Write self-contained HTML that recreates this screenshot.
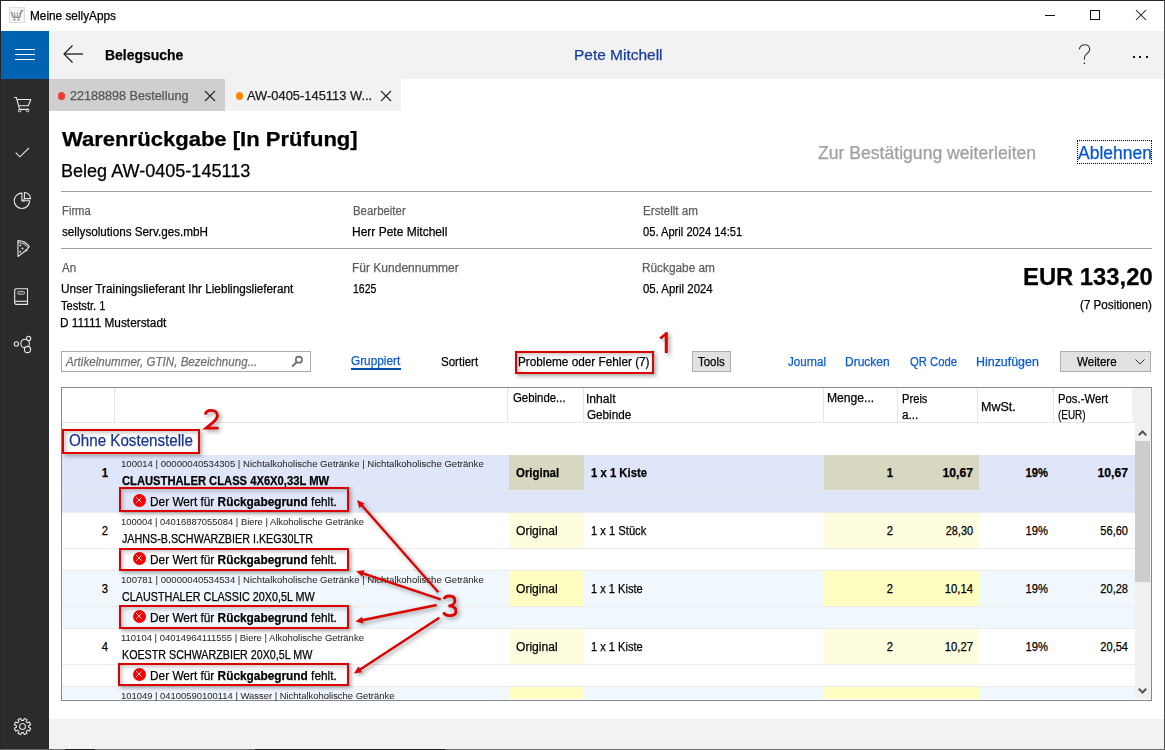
<!DOCTYPE html>
<html><head><meta charset="utf-8"><title>Meine sellyApps</title><style>
html,body{margin:0;padding:0;width:1165px;height:750px;overflow:hidden;background:#fff;font-family:"Liberation Sans",sans-serif;}
.a{position:absolute;}
.t{position:absolute;white-space:nowrap;line-height:1;-webkit-text-stroke:0.25px currentColor;}
svg{position:absolute;overflow:visible;}
</style></head><body>
<!-- window borders -->
<div class="a" style="left:0;top:0;width:1165px;height:1px;background:#262626"></div>
<div class="a" style="left:0;top:0;width:1px;height:750px;background:#262626"></div>
<div class="a" style="left:1164px;top:0;width:1px;height:750px;background:#4a4a4a"></div>
<div class="a" style="left:0;top:749px;width:1165px;height:1px;background:#6a6a6a"></div><div class="a" style="left:65px;top:749px;width:30px;height:1px;background:#222"></div><div class="a" style="left:255px;top:749px;width:190px;height:1px;background:#222"></div>
<!-- title bar icon -->
<div class="a" style="left:9px;top:7px;width:14px;height:14px;border:1px solid #dcdcdc;background:#f4f4f4"></div>
<svg style="left:9px;top:7px" width="16" height="16" viewBox="0 0 16 16"><path d="M2.3 5 L4.3 10.3 H10.6 L12.4 3.6 H14.4" fill="none" stroke="#8c8c8c" stroke-width="1.4"/><path d="M5.2 5.2 L6.2 9.3 M8.2 5.2 L8.5 9.3 M11.2 5.2 L10.6 8" stroke="#a0a0a0" stroke-width="1.1"/><circle cx="5.4" cy="12.6" r="1.1" fill="#8c8c8c"/><circle cx="9.6" cy="12.6" r="1.1" fill="#8c8c8c"/></svg>
<!-- window controls -->
<div class="a" style="left:1045px;top:15px;width:10px;height:1px;background:#111"></div>
<div class="a" style="left:1090px;top:10px;width:8px;height:8px;border:1px solid #111"></div>
<svg style="left:1136px;top:10px" width="10" height="10" viewBox="0 0 10 10"><path d="M0 0 L10 10 M10 0 L0 10" stroke="#111" stroke-width="1.05"/></svg>
<!-- header -->
<div class="a" style="left:49px;top:31px;width:1115px;height:48px;background:#f2f2f2"></div>
<div class="a" style="left:1px;top:31px;width:48px;height:48px;background:#0063b1"></div>
<div class="a" style="left:15px;top:49px;width:20px;height:1px;background:#fff"></div>
<div class="a" style="left:15px;top:54px;width:20px;height:1px;background:#fff"></div>
<div class="a" style="left:15px;top:59px;width:20px;height:1px;background:#fff"></div>
<svg style="left:63px;top:45px" width="20" height="18" viewBox="0 0 20 18"><path d="M9.5 0.5 L1 9 L9.5 17.5" fill="none" stroke="#111" stroke-width="1.1"/><path d="M1.5 9 H20" fill="none" stroke="#333" stroke-width="1.5"/></svg>
<svg style="left:1078px;top:44px" width="14" height="20" viewBox="0 0 14 20"><path d="M1.3 5.3 C1.9 2.3 4 0.7 6.8 0.7 C9.6 0.7 11.7 2.6 11.7 5.3 C11.7 8.2 9.2 9.2 7.6 11 C6.7 12 6.4 13.2 6.4 14.5 V15.8" fill="none" stroke="#333" stroke-width="1.1"/><circle cx="6.4" cy="19.3" r="0.85" fill="#333"/></svg>
<div class="a" style="left:1133px;top:56px;width:2px;height:2px;background:#111"></div>
<div class="a" style="left:1139px;top:56px;width:2px;height:2px;background:#111"></div>
<div class="a" style="left:1146px;top:56px;width:2px;height:2px;background:#111"></div>
<!-- sidebar -->
<div class="a" style="left:1px;top:79px;width:48px;height:670px;background:#2b2b2b"></div>
<!-- sidebar icons -->
<svg style="left:13px;top:96px" width="20" height="17" viewBox="0 0 20 17"><path d="M1.2 1.5 H3.4 L6.6 13.4 H15.9 M3.9 3.5 H17.8 L15.3 9.7 H5.7" fill="none" stroke="#e8e8e8" stroke-width="1.1" stroke-linejoin="round"/><circle cx="6.6" cy="14.6" r="1.3" fill="none" stroke="#e8e8e8" stroke-width="1"/><circle cx="14.5" cy="14.5" r="1.3" fill="none" stroke="#e8e8e8" stroke-width="1"/></svg>
<svg style="left:15px;top:147px" width="15" height="11" viewBox="0 0 15 11"><path d="M0.7 5.6 L4.9 9.8 L13.9 1" fill="none" stroke="#e8e8e8" stroke-width="1.1"/></svg>
<svg style="left:13px;top:191px" width="19" height="19" viewBox="0 0 19 19"><path d="M8.9 9.8 H10.6 V8" fill="none" stroke="#9a9a9a" stroke-width="2"/><path d="M8.9 2.1 A7.7 7.7 0 1 0 16.6 9.8 H8.9 Z" fill="none" stroke="#e8e8e8" stroke-width="1.1"/><path d="M11.4 1.5 A6.1 6.1 0 0 1 17.5 7.6 H11.4 Z" fill="none" stroke="#e8e8e8" stroke-width="1.1"/></svg>
<svg style="left:16px;top:239px" width="15" height="19" viewBox="0 0 15 19"><path d="M1.9 1.6 C6 1.6 10.5 3.8 13.2 7.6 L10.5 11 L2 17.5 Z" fill="none" stroke="#e8e8e8" stroke-width="1.1" stroke-linejoin="round"/><path d="M2.2 3.6 C6 3.8 9.8 5.6 11.8 8.5" fill="none" stroke="#e8e8e8" stroke-width="0.9"/><circle cx="10.2" cy="11.3" r="1.2" fill="#cfcfcf"/><circle cx="4.3" cy="6.4" r="0.9" fill="#e8e8e8"/><circle cx="6.5" cy="9.5" r="0.9" fill="#e8e8e8"/><circle cx="4.3" cy="12.7" r="0.9" fill="#e8e8e8"/></svg>
<svg style="left:14px;top:288px" width="15" height="18" viewBox="0 0 15 18"><path d="M1.8 0.7 H13.5 V16.4 H1.8 L0.7 15.3 V1.8 Z" fill="none" stroke="#e8e8e8" stroke-width="1.1"/><path d="M0.7 13.3 H13.5" stroke="#e8e8e8" stroke-width="1.1"/><rect x="3.7" y="3.7" width="6.7" height="2.4" rx="0.6" fill="none" stroke="#d0d0d0" stroke-width="1"/></svg>
<svg style="left:13px;top:336px" width="19" height="18" viewBox="0 0 19 18"><circle cx="3.4" cy="7.9" r="2.1" fill="none" stroke="#e8e8e8" stroke-width="1.1"/><circle cx="12.1" cy="7.5" r="4.3" fill="none" stroke="#e8e8e8" stroke-width="1.1"/><circle cx="15.6" cy="2.4" r="2.1" fill="#2b2b2b" stroke="#e8e8e8" stroke-width="1.1"/><circle cx="14.5" cy="13.5" r="3.1" fill="#2b2b2b" stroke="#e8e8e8" stroke-width="1.1"/></svg>
<svg style="left:13px;top:717px" width="19" height="19" viewBox="0 0 19 19"><path d="M15.60 9.50 L15.54 10.36 L17.60 11.31 L16.51 13.95 L14.38 13.16 L13.81 13.81 L13.16 14.38 L13.95 16.51 L11.31 17.60 L10.36 15.54 L9.50 15.60 L8.64 15.54 L7.69 17.60 L5.05 16.51 L5.84 14.38 L5.19 13.81 L4.62 13.16 L2.49 13.95 L1.40 11.31 L3.46 10.36 L3.40 9.50 L3.46 8.64 L1.40 7.69 L2.49 5.05 L4.62 5.84 L5.19 5.19 L5.84 4.62 L5.05 2.49 L7.69 1.40 L8.64 3.46 L9.50 3.40 L10.36 3.46 L11.31 1.40 L13.95 2.49 L13.16 4.62 L13.81 5.19 L14.38 5.84 L16.51 5.05 L17.60 7.69 L15.54 8.64 Z" fill="none" stroke="#e8e8e8" stroke-width="1.1" stroke-linejoin="round"/><circle cx="9.5" cy="9.5" r="3" fill="none" stroke="#d8d8d8" stroke-width="1.1"/></svg>
<!-- tabs -->
<div class="a" style="left:49px;top:79px;width:176px;height:32px;background:#cfcfcf"></div>
<div class="a" style="left:225px;top:79px;width:176px;height:32px;background:#f2f2f2"></div>
<div class="a" style="left:57.5px;top:92px;width:7.5px;height:7.5px;border-radius:50%;background:#f03a3a"></div>
<div class="a" style="left:235.5px;top:92px;width:7.5px;height:7.5px;border-radius:50%;background:#ff8c00"></div>
<svg style="left:205px;top:91px" width="10" height="10" viewBox="0 0 10 10"><path d="M0 0 L10 10 M10 0 L0 10" stroke="#222" stroke-width="1.1"/></svg>
<svg style="left:381px;top:91px" width="10" height="10" viewBox="0 0 10 10"><path d="M0 0 L10 10 M10 0 L0 10" stroke="#222" stroke-width="1.1"/></svg>
<!-- bottom strip -->
<div class="a" style="left:49px;top:719px;width:1115px;height:30px;background:#f2f2f2"></div>
<!-- focus rect Ablehnen -->
<div class="a" style="left:1077px;top:140px;width:73px;height:22px;border:1px dotted #000"></div>
<!-- hr lines -->
<div class="a" style="left:61px;top:191px;width:1091px;height:1px;background:#a0a0a0"></div>
<div class="a" style="left:61px;top:248px;width:1091px;height:1px;background:#a0a0a0"></div>
<!-- toolbar -->
<div class="a" style="left:61px;top:351px;width:248px;height:19px;border:1px solid #ababab;background:#fff"></div>
<svg style="left:291px;top:356px" width="12" height="11" viewBox="0 0 12 11"><circle cx="7.9" cy="3.7" r="3.1" fill="none" stroke="#6a6a6a" stroke-width="1.6"/><path d="M5.6 6.1 L1.2 10.5" stroke="#6a6a6a" stroke-width="1.8"/></svg>
<div class="a" style="left:351px;top:368px;width:50px;height:2px;background:#0050b0"></div>
<div class="a" style="left:692px;top:351px;width:37px;height:19px;border:1px solid #adadad;background:#e1e1e1"></div>
<div class="a" style="left:1060px;top:351px;width:89px;height:19px;border:1px solid #adadad;background:#e1e1e1"></div>
<svg style="left:1135px;top:359px" width="10" height="6" viewBox="0 0 10 6"><path d="M0.5 0.5 L5 5 L9.5 0.5" fill="none" stroke="#333" stroke-width="1"/></svg>
<!-- table -->
<div class="a" style="left:61px;top:387px;width:1089px;height:312px;border:1px solid #828790;background:#fff"></div>
<div class="a" style="left:1132px;top:388px;width:19px;height:35px;background:#f0f0f0"></div>
<div class="a" style="left:1135px;top:423px;width:16px;height:276px;background:#f0f0f0"></div>
<div class="a" style="left:62px;top:455px;width:1073px;height:58px;background:#e0e6fa"></div>
<div class="a" style="left:509px;top:455px;width:75px;height:35px;background:#d8d7bf"></div>
<div class="a" style="left:824px;top:455px;width:155px;height:35px;background:#d8d7bf"></div>
<div class="a" style="left:62px;top:490px;width:1073px;height:1px;background:#ebebeb"></div>
<div class="a" style="left:62px;top:512px;width:1073px;height:1px;background:#ebebeb"></div>
<div class="a" style="left:62px;top:513px;width:1073px;height:58px;background:#ffffff"></div>
<div class="a" style="left:509px;top:513px;width:75px;height:35px;background:#fffde0"></div>
<div class="a" style="left:824px;top:513px;width:155px;height:35px;background:#fffde0"></div>
<div class="a" style="left:62px;top:548px;width:1073px;height:1px;background:#ebebeb"></div>
<div class="a" style="left:62px;top:570px;width:1073px;height:1px;background:#ebebeb"></div>
<div class="a" style="left:62px;top:571px;width:1073px;height:58px;background:#f0f8fd"></div>
<div class="a" style="left:509px;top:571px;width:75px;height:35px;background:#ffffc2"></div>
<div class="a" style="left:824px;top:571px;width:155px;height:35px;background:#ffffc2"></div>
<div class="a" style="left:62px;top:606px;width:1073px;height:1px;background:#ebebeb"></div>
<div class="a" style="left:62px;top:628px;width:1073px;height:1px;background:#ebebeb"></div>
<div class="a" style="left:62px;top:629px;width:1073px;height:58px;background:#ffffff"></div>
<div class="a" style="left:509px;top:629px;width:75px;height:35px;background:#fffde0"></div>
<div class="a" style="left:824px;top:629px;width:155px;height:35px;background:#fffde0"></div>
<div class="a" style="left:62px;top:664px;width:1073px;height:1px;background:#ebebeb"></div>
<div class="a" style="left:62px;top:686px;width:1073px;height:1px;background:#ebebeb"></div>
<div class="a" style="left:62px;top:687px;width:1073px;height:12px;background:#f0f8fd"></div>
<div class="a" style="left:509px;top:687px;width:75px;height:12px;background:#ffffc2"></div>
<div class="a" style="left:824px;top:687px;width:155px;height:12px;background:#ffffc2"></div>
<div class="a" style="left:132.8px;top:493.8px;width:13.2px;height:13.2px;border-radius:50%;background:#f50000"></div>
<svg style="left:136.4px;top:497.4px" width="6" height="6" viewBox="0 0 6 6"><path d="M0.2 0.2 L5.8 5.8 M5.8 0.2 L0.2 5.8" stroke="#fff" stroke-width="0.85" stroke-opacity="0.95"/></svg>
<div class="a" style="left:132.8px;top:551.8px;width:13.2px;height:13.2px;border-radius:50%;background:#f50000"></div>
<svg style="left:136.4px;top:555.4px" width="6" height="6" viewBox="0 0 6 6"><path d="M0.2 0.2 L5.8 5.8 M5.8 0.2 L0.2 5.8" stroke="#fff" stroke-width="0.85" stroke-opacity="0.95"/></svg>
<div class="a" style="left:132.8px;top:609.8px;width:13.2px;height:13.2px;border-radius:50%;background:#f50000"></div>
<svg style="left:136.4px;top:613.4px" width="6" height="6" viewBox="0 0 6 6"><path d="M0.2 0.2 L5.8 5.8 M5.8 0.2 L0.2 5.8" stroke="#fff" stroke-width="0.85" stroke-opacity="0.95"/></svg>
<div class="a" style="left:132.8px;top:667.8px;width:13.2px;height:13.2px;border-radius:50%;background:#f50000"></div>
<svg style="left:136.4px;top:671.4px" width="6" height="6" viewBox="0 0 6 6"><path d="M0.2 0.2 L5.8 5.8 M5.8 0.2 L0.2 5.8" stroke="#fff" stroke-width="0.85" stroke-opacity="0.95"/></svg>
<div class="a" style="left:62px;top:422px;width:1070px;height:1px;background:#e5e5e5"></div>
<div class="a" style="left:114px;top:388px;width:1px;height:35px;background:#e5e5e5"></div>
<div class="a" style="left:507px;top:388px;width:1px;height:35px;background:#e5e5e5"></div>
<div class="a" style="left:583px;top:388px;width:1px;height:35px;background:#e5e5e5"></div>
<div class="a" style="left:823px;top:388px;width:1px;height:35px;background:#e5e5e5"></div>
<div class="a" style="left:897px;top:388px;width:1px;height:35px;background:#e5e5e5"></div>
<div class="a" style="left:977px;top:388px;width:1px;height:35px;background:#e5e5e5"></div>
<div class="a" style="left:1053px;top:388px;width:1px;height:35px;background:#e5e5e5"></div>
<!-- scrollbar -->
<div class="a" style="left:1135px;top:441px;width:15px;height:141px;background:#cdcdcd"></div>
<svg style="left:1138px;top:430px" width="9" height="6" viewBox="0 0 9 6"><path d="M0.8 5.2 L4.5 1.5 L8.2 5.2" fill="none" stroke="#555" stroke-width="2"/></svg>
<svg style="left:1138px;top:688px" width="9" height="6" viewBox="0 0 9 6"><path d="M0.8 0.8 L4.5 4.5 L8.2 0.8" fill="none" stroke="#555" stroke-width="2"/></svg>
<span class="t" id="t0" style="left:30.00px;top:10.42px;font-size:12.5px;color:#000;transform:scaleX(0.9444);transform-origin:left;">Meine sellyApps</span>
<span class="t" id="t1" style="left:104.50px;top:47.73px;font-size:14.5px;color:#000;font-weight:bold;transform:scaleX(0.9630);transform-origin:left;">Belegsuche</span>
<span class="t" id="t2" style="left:573.50px;top:46.96px;font-size:15.4px;color:#1a3c9c;transform:scaleX(1.0048);transform-origin:left;">Pete Mitchell</span>
<span class="t" id="t3" style="left:69.50px;top:90.42px;font-size:12.5px;color:#555;transform:scaleX(1.0086);transform-origin:left;">22188898 Bestellung</span>
<span class="t" id="t4" style="left:247.00px;top:90.42px;font-size:12.5px;color:#1a1a1a;transform:scaleX(1.0314);transform-origin:left;">AW-0405-145113 W...</span>
<span class="t" id="t5" style="left:62.00px;top:128.65px;font-size:20.5px;color:#000;font-weight:bold;transform:scaleX(1.0757);transform-origin:left;">Warenrückgabe [In Prüfung]</span>
<span class="t" id="t6" style="left:61.00px;top:163.19px;font-size:17.5px;color:#000;transform:scaleX(1.0308);transform-origin:left;">Beleg AW-0405-145113</span>
<span class="t" id="t7" style="left:818.00px;top:143.76px;font-size:18px;color:#a0a0a0;transform:scaleX(0.9775);transform-origin:left;">Zur Bestätigung weiterleiten</span>
<span class="t" id="t8" style="left:1077.50px;top:143.76px;font-size:18px;color:#0055d5;transform:scaleX(0.9711);transform-origin:left;">Ablehnen</span>
<span class="t" id="t9" style="left:61.50px;top:205.42px;font-size:12.5px;color:#5d5d5d;transform:scaleX(0.9005);transform-origin:left;">Firma</span>
<span class="t" id="t10" style="left:61.50px;top:225.62px;font-size:12.5px;color:#000;transform:scaleX(0.9355);transform-origin:left;">sellysolutions Serv.ges.mbH</span>
<span class="t" id="t11" style="left:353.00px;top:205.42px;font-size:12.5px;color:#5d5d5d;transform:scaleX(0.9138);transform-origin:left;">Bearbeiter</span>
<span class="t" id="t12" style="left:352.00px;top:225.62px;font-size:12.5px;color:#000;transform:scaleX(0.9596);transform-origin:left;">Herr Pete Mitchell</span>
<span class="t" id="t13" style="left:643.00px;top:205.42px;font-size:12.5px;color:#5d5d5d;transform:scaleX(0.9322);transform-origin:left;">Erstellt am</span>
<span class="t" id="t14" style="left:643.00px;top:225.62px;font-size:12.5px;color:#000;transform:scaleX(0.8919);transform-origin:left;">05. April 2024 14:51</span>
<span class="t" id="t15" style="left:61.50px;top:262.22px;font-size:12.5px;color:#5d5d5d;transform:scaleX(0.9220);transform-origin:left;">An</span>
<span class="t" id="t16" style="left:61.00px;top:282.62px;font-size:12.5px;color:#000;transform:scaleX(0.9393);transform-origin:left;">Unser Trainingslieferant Ihr Lieblingslieferant</span>
<span class="t" id="t17" style="left:61.00px;top:300.32px;font-size:12.5px;color:#000;transform:scaleX(0.8882);transform-origin:left;">Teststr. 1</span>
<span class="t" id="t18" style="left:60.00px;top:317.32px;font-size:12.5px;color:#000;transform:scaleX(0.9464);transform-origin:left;">D 11111 Musterstadt</span>
<span class="t" id="t19" style="left:352.00px;top:262.22px;font-size:12.5px;color:#5d5d5d;transform:scaleX(0.9604);transform-origin:left;">Für Kundennummer</span>
<span class="t" id="t20" style="left:353.00px;top:282.62px;font-size:12.5px;color:#000;transform:scaleX(0.8382);transform-origin:left;">1625</span>
<span class="t" id="t21" style="left:642.00px;top:262.22px;font-size:12.5px;color:#5d5d5d;transform:scaleX(0.9457);transform-origin:left;">Rückgabe am</span>
<span class="t" id="t22" style="left:643.00px;top:282.62px;font-size:12.5px;color:#000;transform:scaleX(0.9107);transform-origin:left;">05. April 2024</span>
<span class="t" id="t23" style="left:1022.50px;top:265.94px;font-size:23.7px;color:#000;font-weight:bold;transform:scaleX(1.0048);transform-origin:left;">EUR 133,20</span>
<span class="t" id="t24" style="left:1079.50px;top:298.84px;font-size:12px;color:#000;transform:scaleX(0.9703);transform-origin:left;">(7 Positionen)</span>
<span class="t" id="t25" style="left:65.50px;top:356.42px;font-size:12.5px;color:#707070;font-style:italic;transform:scaleX(0.9272);transform-origin:left;">Artikelnummer, GTIN, Bezeichnung...</span>
<span class="t" id="t26" style="left:351.00px;top:355.42px;font-size:12.5px;color:#0a5ad2;transform:scaleX(0.9434);transform-origin:left;">Gruppiert</span>
<span class="t" id="t27" style="left:441.00px;top:356.42px;font-size:12.5px;color:#000;transform:scaleX(0.9222);transform-origin:left;">Sortiert</span>
<span class="t" id="t28" style="left:518.00px;top:356.42px;font-size:12.5px;color:#000;transform:scaleX(0.9420);transform-origin:left;">Probleme oder Fehler (7)</span>
<span class="t" id="t29" style="left:698.00px;top:356.22px;font-size:12.5px;color:#000;transform:scaleX(0.9147);transform-origin:left;">Tools</span>
<span class="t" id="t30" style="left:788.00px;top:356.22px;font-size:12.5px;color:#0a5ad2;transform:scaleX(0.9268);transform-origin:left;">Journal</span>
<span class="t" id="t31" style="left:845.00px;top:356.22px;font-size:12.5px;color:#0a5ad2;transform:scaleX(0.9611);transform-origin:left;">Drucken</span>
<span class="t" id="t32" style="left:910.00px;top:356.22px;font-size:12.5px;color:#0a5ad2;transform:scaleX(0.9038);transform-origin:left;">QR Code</span>
<span class="t" id="t33" style="left:976.00px;top:356.22px;font-size:12.5px;color:#0a5ad2;transform:scaleX(0.9936);transform-origin:left;">Hinzufügen</span>
<span class="t" id="t34" style="left:1076.50px;top:356.22px;font-size:12.5px;color:#000;transform:scaleX(0.9258);transform-origin:left;">Weitere</span>
<span class="t" id="t35" style="left:513.00px;top:392.42px;font-size:12.5px;color:#000;transform:scaleX(0.9124);transform-origin:left;">Gebinde...</span>
<span class="t" id="t36" style="left:586.00px;top:393.42px;font-size:12.5px;color:#000;transform:scaleX(0.9672);transform-origin:left;">Inhalt</span>
<span class="t" id="t37" style="left:587.00px;top:409.42px;font-size:12.5px;color:#000;transform:scaleX(0.9364);transform-origin:left;">Gebinde</span>
<span class="t" id="t38" style="left:827.00px;top:392.42px;font-size:12.5px;color:#000;transform:scaleX(0.9713);transform-origin:left;">Menge...</span>
<span class="t" id="t39" style="left:902.00px;top:393.42px;font-size:12.5px;color:#000;transform:scaleX(0.8935);transform-origin:left;">Preis</span>
<span class="t" id="t40" style="left:902.00px;top:409.42px;font-size:12.5px;color:#000;transform:scaleX(0.9412);transform-origin:left;">a...</span>
<span class="t" id="t41" style="left:981.00px;top:401.42px;font-size:12.5px;color:#000;transform:scaleX(1.0009);transform-origin:left;">MwSt.</span>
<span class="t" id="t42" style="left:1057.50px;top:393.42px;font-size:12.5px;color:#000;transform:scaleX(0.9056);transform-origin:left;">Pos.-Wert</span>
<span class="t" id="t43" style="left:1057.50px;top:409.42px;font-size:12.5px;color:#000;transform:scaleX(0.7946);transform-origin:left;">(EUR)</span>
<span class="t" id="t44" style="left:69.00px;top:433.46px;font-size:16px;color:#18338f;transform:scaleX(0.9477);transform-origin:left;">Ohne Kostenstelle</span>
<span class="t" id="t45" style="left:108.00px;top:467.42px;font-size:12.5px;color:#000;font-weight:bold;transform:translateX(-100%) scaleX(0.9000);transform-origin:right;">1</span>
<span class="t" id="t46" style="left:120.50px;top:458.87px;font-size:9.6px;color:#2a2a2a;transform:scaleX(0.9972);transform-origin:left;-webkit-text-stroke:0.05px #2a2a2a;">100014 | 00000040534305 | Nichtalkoholische Getränke | Nichtalkoholische Getränke</span>
<span class="t" id="t47" style="left:121.50px;top:475.42px;font-size:12.5px;color:#000;font-weight:bold;transform:scaleX(0.8961);transform-origin:left;">CLAUSTHALER CLASS 4X6X0,33L MW</span>
<span class="t" id="t48" style="left:516.00px;top:467.42px;font-size:12.5px;color:#000;font-weight:bold;transform:scaleX(0.9133);transform-origin:left;">Original</span>
<span class="t" id="t49" style="left:591.00px;top:467.42px;font-size:12.5px;color:#000;font-weight:bold;transform:scaleX(0.9065);transform-origin:left;">1 x 1 Kiste</span>
<span class="t" id="t50" style="left:893.00px;top:467.42px;font-size:12.5px;color:#000;font-weight:bold;transform:translateX(-100%) scaleX(0.9000);transform-origin:right;">1</span>
<span class="t" id="t51" style="left:973.00px;top:467.42px;font-size:12.5px;color:#000;font-weight:bold;transform:translateX(-100%) scaleX(0.9747);transform-origin:right;">10,67</span>
<span class="t" id="t52" style="left:1048.00px;top:467.42px;font-size:12.5px;color:#000;font-weight:bold;transform:translateX(-100%) scaleX(0.8961);transform-origin:right;">19%</span>
<span class="t" id="t53" style="left:1128.00px;top:467.42px;font-size:12.5px;color:#000;font-weight:bold;transform:translateX(-100%) scaleX(0.9746);transform-origin:right;">10,67</span>
<span class="t" id="t54" style="left:108.00px;top:525.42px;font-size:12.5px;color:#000;transform:translateX(-100%) scaleX(0.9000);transform-origin:right;">2</span>
<span class="t" id="t55" style="left:120.50px;top:516.87px;font-size:9.6px;color:#2a2a2a;transform:scaleX(0.9798);transform-origin:left;-webkit-text-stroke:0.05px #2a2a2a;">100004 | 04016887055084 | Biere | Alkoholische Getränke</span>
<span class="t" id="t56" style="left:121.50px;top:533.42px;font-size:12.5px;color:#000;transform:scaleX(0.8595);transform-origin:left;">JAHNS-B.SCHWARZBIER I.KEG30LTR</span>
<span class="t" id="t57" style="left:516.00px;top:525.42px;font-size:12.5px;color:#000;transform:scaleX(0.9676);transform-origin:left;">Original</span>
<span class="t" id="t58" style="left:591.00px;top:525.42px;font-size:12.5px;color:#000;transform:scaleX(0.8937);transform-origin:left;">1 x 1 Stück</span>
<span class="t" id="t59" style="left:893.00px;top:525.42px;font-size:12.5px;color:#000;transform:translateX(-100%) scaleX(0.9000);transform-origin:right;">2</span>
<span class="t" id="t60" style="left:973.00px;top:525.42px;font-size:12.5px;color:#000;transform:translateX(-100%) scaleX(0.8715);transform-origin:right;">28,30</span>
<span class="t" id="t61" style="left:1048.00px;top:525.42px;font-size:12.5px;color:#000;transform:translateX(-100%) scaleX(0.8961);transform-origin:right;">19%</span>
<span class="t" id="t62" style="left:1128.00px;top:525.42px;font-size:12.5px;color:#000;transform:translateX(-100%) scaleX(0.8839);transform-origin:right;">56,60</span>
<span class="t" id="t63" style="left:108.00px;top:583.42px;font-size:12.5px;color:#000;transform:translateX(-100%) scaleX(0.9000);transform-origin:right;">3</span>
<span class="t" id="t64" style="left:120.50px;top:574.87px;font-size:9.6px;color:#2a2a2a;transform:scaleX(0.9972);transform-origin:left;-webkit-text-stroke:0.05px #2a2a2a;">100781 | 00000040534534 | Nichtalkoholische Getränke | Nichtalkoholische Getränke</span>
<span class="t" id="t65" style="left:121.50px;top:591.42px;font-size:12.5px;color:#000;transform:scaleX(0.8637);transform-origin:left;">CLAUSTHALER CLASSIC 20X0,5L MW</span>
<span class="t" id="t66" style="left:516.00px;top:583.42px;font-size:12.5px;color:#000;transform:scaleX(0.9676);transform-origin:left;">Original</span>
<span class="t" id="t67" style="left:591.00px;top:583.42px;font-size:12.5px;color:#000;transform:scaleX(0.8863);transform-origin:left;">1 x 1 Kiste</span>
<span class="t" id="t68" style="left:893.00px;top:583.42px;font-size:12.5px;color:#000;transform:translateX(-100%) scaleX(0.9000);transform-origin:right;">2</span>
<span class="t" id="t69" style="left:973.00px;top:583.42px;font-size:12.5px;color:#000;transform:translateX(-100%) scaleX(0.9038);transform-origin:right;">10,14</span>
<span class="t" id="t70" style="left:1048.00px;top:583.42px;font-size:12.5px;color:#000;transform:translateX(-100%) scaleX(0.8961);transform-origin:right;">19%</span>
<span class="t" id="t71" style="left:1128.00px;top:583.42px;font-size:12.5px;color:#000;transform:translateX(-100%) scaleX(0.8839);transform-origin:right;">20,28</span>
<span class="t" id="t72" style="left:108.00px;top:641.42px;font-size:12.5px;color:#000;transform:translateX(-100%) scaleX(0.9000);transform-origin:right;">4</span>
<span class="t" id="t73" style="left:120.50px;top:632.87px;font-size:9.6px;color:#2a2a2a;transform:scaleX(0.9878);transform-origin:left;-webkit-text-stroke:0.05px #2a2a2a;">110104 | 04014964111555 | Biere | Alkoholische Getränke</span>
<span class="t" id="t74" style="left:121.50px;top:649.42px;font-size:12.5px;color:#000;transform:scaleX(0.8568);transform-origin:left;">KOESTR SCHWARZBIER 20X0,5L MW</span>
<span class="t" id="t75" style="left:516.00px;top:641.42px;font-size:12.5px;color:#000;transform:scaleX(0.9676);transform-origin:left;">Original</span>
<span class="t" id="t76" style="left:591.00px;top:641.42px;font-size:12.5px;color:#000;transform:scaleX(0.8863);transform-origin:left;">1 x 1 Kiste</span>
<span class="t" id="t77" style="left:893.00px;top:641.42px;font-size:12.5px;color:#000;transform:translateX(-100%) scaleX(0.9000);transform-origin:right;">2</span>
<span class="t" id="t78" style="left:973.00px;top:641.42px;font-size:12.5px;color:#000;transform:translateX(-100%) scaleX(0.9038);transform-origin:right;">10,27</span>
<span class="t" id="t79" style="left:1048.00px;top:641.42px;font-size:12.5px;color:#000;transform:translateX(-100%) scaleX(0.8961);transform-origin:right;">19%</span>
<span class="t" id="t80" style="left:1128.00px;top:641.42px;font-size:12.5px;color:#000;transform:translateX(-100%) scaleX(0.8839);transform-origin:right;">20,54</span>
<span class="t" id="t81" style="left:150.00px;top:496.42px;font-size:12.5px;color:#000;transform:scaleX(0.9480);transform-origin:left;">Der Wert für <b>Rückgabegrund</b> fehlt.</span>
<span class="t" id="t82" style="left:150.00px;top:554.42px;font-size:12.5px;color:#000;transform:scaleX(0.9480);transform-origin:left;">Der Wert für <b>Rückgabegrund</b> fehlt.</span>
<span class="t" id="t83" style="left:150.00px;top:612.42px;font-size:12.5px;color:#000;transform:scaleX(0.9480);transform-origin:left;">Der Wert für <b>Rückgabegrund</b> fehlt.</span>
<span class="t" id="t84" style="left:150.00px;top:670.42px;font-size:12.5px;color:#000;transform:scaleX(0.9480);transform-origin:left;">Der Wert für <b>Rückgabegrund</b> fehlt.</span>
<span class="t" id="t85" style="left:120.50px;top:690.87px;font-size:9.6px;color:#2a2a2a;transform:scaleX(0.9820);transform-origin:left;-webkit-text-stroke:0.05px #2a2a2a;">101049 | 04100590100114 | Wasser | Nichtalkoholische Getränke</span>
<div class="a" style="left:515px;top:351px;width:135px;height:19px;border:2px solid #dd0000;box-shadow:2px 2px 4px rgba(0,0,0,0.35), inset 2px 2px 4px rgba(0,0,0,0.22);"></div>
<div class="a" style="left:61.5px;top:429px;width:134.0px;height:21px;border:2px solid #dd0000;box-shadow:2px 2px 4px rgba(0,0,0,0.35), inset 2px 2px 4px rgba(0,0,0,0.22);"></div>
<div class="a" style="left:119px;top:487px;width:226px;height:21px;border:2px solid #dd0000;box-shadow:2px 2px 4px rgba(0,0,0,0.35), inset 2px 2px 4px rgba(0,0,0,0.22);"></div>
<div class="a" style="left:119px;top:548px;width:226px;height:19px;border:2px solid #dd0000;box-shadow:2px 2px 4px rgba(0,0,0,0.35), inset 2px 2px 4px rgba(0,0,0,0.22);"></div>
<div class="a" style="left:119px;top:605px;width:226px;height:20px;border:2px solid #dd0000;box-shadow:2px 2px 4px rgba(0,0,0,0.35), inset 2px 2px 4px rgba(0,0,0,0.22);"></div>
<div class="a" style="left:118px;top:663px;width:227px;height:19px;border:2px solid #dd0000;box-shadow:2px 2px 4px rgba(0,0,0,0.35), inset 2px 2px 4px rgba(0,0,0,0.22);"></div>
<svg style="left:0;top:0;filter:drop-shadow(2px 2px 2px rgba(0,0,0,0.4))" width="1165" height="750"><path d="M438.3 592.3 L360.6 504.1" stroke="#dd0000" stroke-width="2.3" fill="none"/><path d="M357.0 500.0 L364.5 503.4 L359.4 507.9 Z" fill="#dd0000"/><path d="M440.7 599.3 L361.4 572.9" stroke="#dd0000" stroke-width="2.3" fill="none"/><path d="M356.2 571.2 L364.4 570.3 L362.2 576.8 Z" fill="#dd0000"/><path d="M436.7 605.0 L360.8 620.5" stroke="#dd0000" stroke-width="2.3" fill="none"/><path d="M355.4 621.6 L362.1 616.8 L363.4 623.4 Z" fill="#dd0000"/><path d="M439.3 617.7 L358.6 670.5" stroke="#dd0000" stroke-width="2.3" fill="none"/><path d="M354.0 673.5 L358.4 666.5 L362.1 672.2 Z" fill="#dd0000"/></svg>
<svg style="left:0;top:0;filter:drop-shadow(2px 2px 2px rgba(0,0,0,0.4))" width="1165" height="750"><path d="M666.3 332.2 V353" stroke="#dd0000" stroke-width="3" fill="none"/><path d="M660.2 338.6 L666.8 333.2" stroke="#dd0000" stroke-width="2.6" fill="none"/><path d="M205.4 414.6 C205.6 411.6 208 410.3 211.3 410.3 C215 410.3 217.4 412.4 217.4 415.5 C217.4 418.5 215.5 420.3 212.5 422.8 L206 428.2 H218.6" stroke="#dd0000" stroke-width="2.8" fill="none" stroke-linejoin="miter"/><path d="M444 599.2 C444.6 597 446.6 596 449.3 596 C452.8 596 454.9 597.9 454.9 600.7 C454.9 603.8 452.4 605.9 448.4 605.9 C453.4 605.9 456 608.1 456 611.1 C456 614 453.4 615.7 449.5 615.7 C446.5 615.7 444.4 614.6 443.4 612.4" stroke="#dd0000" stroke-width="2.8" fill="none"/></svg>
</body></html>
